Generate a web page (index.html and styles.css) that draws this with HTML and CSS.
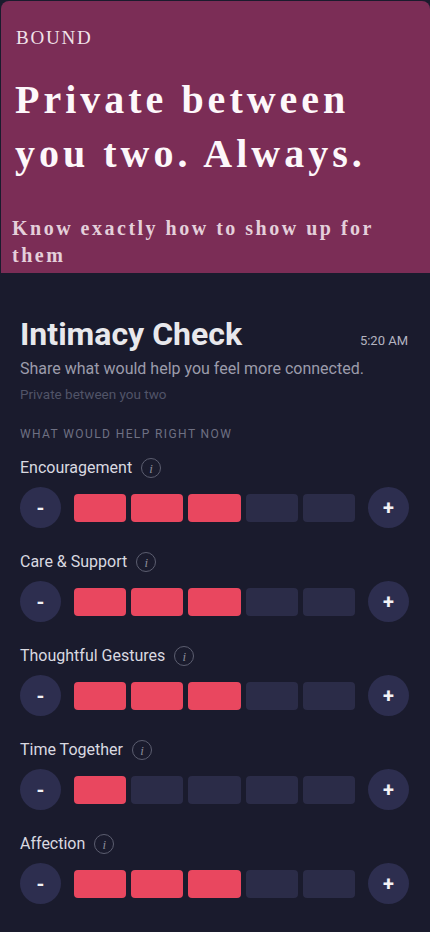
FILE: index.html
```html
<!DOCTYPE html>
<html lang="en">
<head>
<meta charset="utf-8">
<title>Bound – Intimacy Check</title>
<link rel="stylesheet" href="styles.css">
</head>
<body>
<header class="hero">
  <div class="brand">BOUND</div>
  <h1 class="hero-title">Private between you two. Always.</h1>
  <p class="hero-sub">Know exactly how to show up for them</p>
</header>

<main class="check">
  <div class="check-head">
    <h2 class="check-title">Intimacy Check</h2>
    <span class="check-time">5:20 AM</span>
  </div>
  <p class="check-desc">Share what would help you feel more connected.</p>
  <p class="check-private">Private between you two</p>
  <p class="section-label">WHAT WOULD HELP RIGHT NOW</p>

  <section class="need">
    <div class="need-label">Encouragement <span class="info">i</span></div>
    <div class="control">
      <button class="round">-</button>
      <div class="bars"><span class="bar on"></span><span class="bar on"></span><span class="bar on"></span><span class="bar"></span><span class="bar"></span></div>
      <button class="round">+</button>
    </div>
  </section>

  <section class="need">
    <div class="need-label">Care &amp; Support <span class="info">i</span></div>
    <div class="control">
      <button class="round">-</button>
      <div class="bars"><span class="bar on"></span><span class="bar on"></span><span class="bar on"></span><span class="bar"></span><span class="bar"></span></div>
      <button class="round">+</button>
    </div>
  </section>

  <section class="need">
    <div class="need-label">Thoughtful Gestures <span class="info">i</span></div>
    <div class="control">
      <button class="round">-</button>
      <div class="bars"><span class="bar on"></span><span class="bar on"></span><span class="bar on"></span><span class="bar"></span><span class="bar"></span></div>
      <button class="round">+</button>
    </div>
  </section>

  <section class="need">
    <div class="need-label">Time Together <span class="info">i</span></div>
    <div class="control">
      <button class="round">-</button>
      <div class="bars"><span class="bar on"></span><span class="bar"></span><span class="bar"></span><span class="bar"></span><span class="bar"></span></div>
      <button class="round">+</button>
    </div>
  </section>

  <section class="need">
    <div class="need-label">Affection <span class="info">i</span></div>
    <div class="control">
      <button class="round">-</button>
      <div class="bars"><span class="bar on"></span><span class="bar on"></span><span class="bar on"></span><span class="bar"></span><span class="bar"></span></div>
      <button class="round">+</button>
    </div>
  </section>
</main>
</body>
</html>
```

FILE: styles.css
```css
* { box-sizing: border-box; }

html, body {
  margin: 0;
  padding: 0;
  background: #1a1b2d;
  height: 932px;
  overflow: hidden;
}

body {
  font-family: Roboto, "Liberation Sans", sans-serif;
  color: #e6e6ea;
}

.hero {
  margin: 1px 0 0 1px;
  height: 272px;
  background: #7b2d56;
  border-radius: 8px 8px 0 0;
  padding-top: 25px;
  font-family: "Liberation Serif", "DejaVu Serif", serif;
}

.brand {
  padding-left: 15px;
  font-size: 19px;
  line-height: 24px;
  letter-spacing: 1.8px;
  color: #f1e3ea;
}

.hero-title {
  margin: 23px 0 0;
  padding-left: 14px;
  padding-right: 40px;
  font-size: 40px;
  line-height: 54px;
  font-weight: 700;
  letter-spacing: 4px;
  color: #fdf7fa;
}

.hero-sub {
  margin: 34px 0 0;
  padding-left: 11px;
  padding-right: 40px;
  font-size: 20px;
  line-height: 27px;
  font-weight: 700;
  letter-spacing: 2.5px;
  color: #e4cfda;
}

.check {
  padding: 43px 0 0;
}

.check-head {
  display: flex;
  align-items: baseline;
  justify-content: space-between;
  padding: 0 22px 0 20px;
}

.check-title {
  margin: 0;
  font-size: 32px;
  line-height: 36px;
  font-weight: 700;
  color: #e8e8ec;
}

.check-time {
  font-size: 13px;
  color: #b4b4c0;
}

.check-desc {
  margin: 7px 0 0;
  padding-left: 20px;
  font-size: 16px;
  line-height: 20px;
  color: #9c9cab;
}

.check-private {
  margin: 7px 0 0;
  padding-left: 20px;
  font-size: 13.5px;
  line-height: 17px;
  color: #515468;
}

.section-label {
  margin: 24px 0 0;
  padding-left: 20px;
  font-size: 12px;
  line-height: 15px;
  letter-spacing: 1.4px;
  color: #6e7083;
}

.need {
  margin-top: 16px;
}

.need + .need {
  margin-top: 24px;
}

.need-label {
  display: flex;
  align-items: center;
  gap: 9px;
  padding-left: 20px;
  font-size: 16px;
  line-height: 20px;
  color: #d9d9e0;
}

.info {
  width: 20px;
  height: 20px;
  border: 1px solid #5c5e70;
  border-radius: 50%;
  display: inline-flex;
  align-items: center;
  justify-content: center;
  font-family: "Liberation Serif", serif;
  font-size: 13px;
  font-style: italic;
  color: #8a8b99;
  line-height: 1;
}

.control {
  margin-top: 9px;
  display: flex;
  align-items: center;
  gap: 13px;
  padding: 0 21px 0 20px;
}

.round {
  flex: none;
  width: 41px;
  height: 41px;
  border: none;
  border-radius: 50%;
  background: #2d2e4f;
  color: #f2f2f6;
  font-family: Roboto, "Liberation Sans", sans-serif;
  font-weight: 700;
  font-size: 20px;
  line-height: 1;
  padding: 0;
  display: flex;
  align-items: center;
  justify-content: center;
}

.bars {
  flex: 1;
  display: flex;
  gap: 5px;
}

.bar {
  flex: 1;
  height: 28px;
  border-radius: 4px;
  background: #2b2c48;
}

.bar.on {
  background: #e9475f;
}
```
